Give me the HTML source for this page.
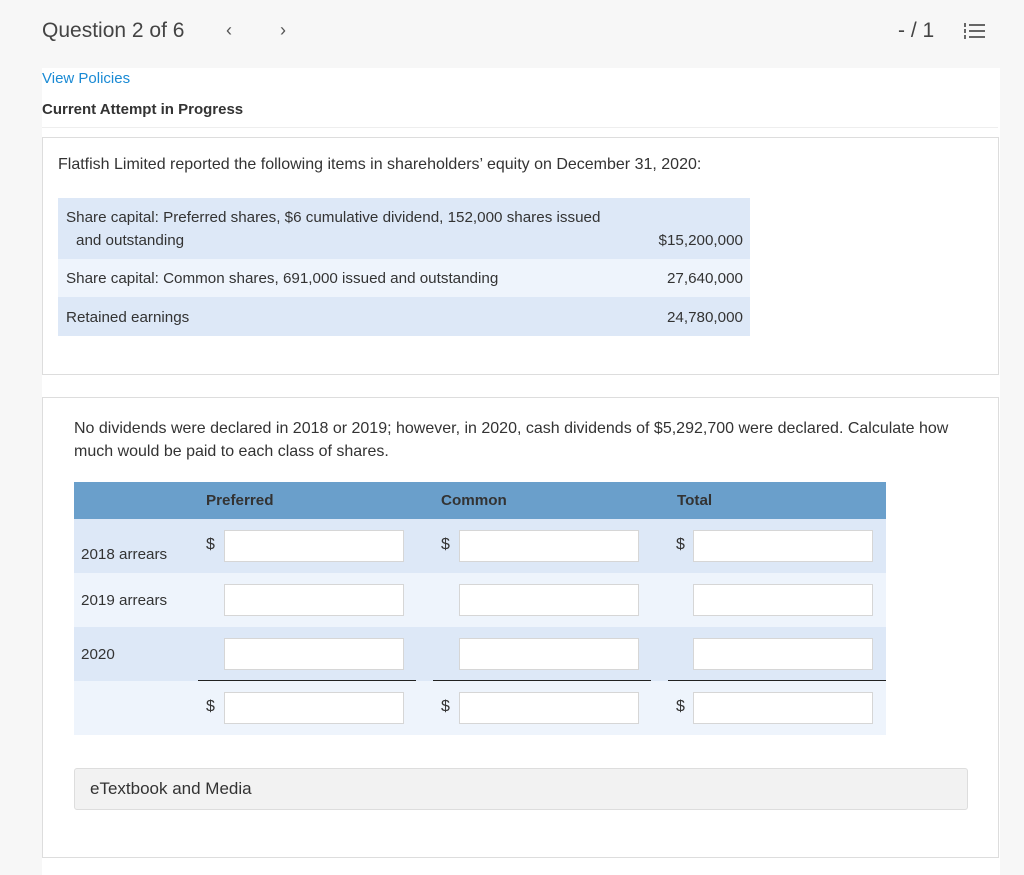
<!DOCTYPE html>
<html><head><style>
body{margin:0;background:#f7f7f7;font-family:"Liberation Sans",sans-serif;color:#333;width:1024px;height:875px;position:relative;overflow:hidden}
.a{position:absolute}
.inp{position:absolute;height:32px;background:#fff;border:1px solid #d6d6d6;box-sizing:border-box;width:180px}
.t{font-size:16px;color:#333}
.s{font-size:15.2px}
.r{text-align:right;width:200px}
</style></head><body>
<div class="a" style="left:42px;top:19px;font-size:21px;color:#444">Question 2 of 6</div>
<div class="a" style="left:226px;top:20px;font-size:18px;color:#555">&lsaquo;</div>
<div class="a" style="left:280px;top:20px;font-size:18px;color:#555">&rsaquo;</div>
<div class="a" style="left:898px;top:19px;font-size:21px;color:#444">- / 1</div>
<svg class="a" style="left:963px;top:22px" width="22" height="18"><g fill="#666"><rect x="6" y="2" width="16" height="2"/><rect x="6" y="8" width="16" height="2"/><rect x="6" y="14" width="16" height="2"/><rect x="1" y="1" width="2" height="4"/><rect x="1" y="7" width="2" height="4"/><rect x="1" y="13" width="2" height="4"/></g></svg>
<div class="a" style="left:42px;top:68px;width:958px;height:807px;background:#fff"></div>
<div class="a" style="left:42px;top:70px;font-size:15px;color:#1a8ad4">View Policies</div>
<div class="a" style="left:42px;top:101px;font-size:15px;font-weight:bold;color:#333">Current Attempt in Progress</div>
<div class="a" style="left:42px;top:127px;width:956px;height:1px;background:#eee"></div>
<div class="a" style="left:42px;top:137px;width:955px;height:236px;border:1px solid #ddd;background:#fff"></div>
<div class="a t" style="left:58px;top:156px">Flatfish Limited reported the following items in shareholders’ equity on December 31, 2020:</div>
<div class="a" style="left:58px;top:198px;width:692px;height:61px;background:#dde8f7"></div>
<div class="a" style="left:58px;top:259px;width:692px;height:38px;background:#eef4fc"></div>
<div class="a" style="left:58px;top:297px;width:692px;height:39px;background:#dde8f7"></div>
<div class="a t s" style="left:66px;top:209px">Share capital: Preferred shares, $6 cumulative dividend, 152,000 shares issued</div>
<div class="a t s" style="left:76px;top:232px">and outstanding</div>
<div class="a t s r" style="left:543px;top:232px">$15,200,000</div>
<div class="a t s" style="left:66px;top:270px">Share capital: Common shares, 691,000 issued and outstanding</div>
<div class="a t s r" style="left:543px;top:270px">27,640,000</div>
<div class="a t s" style="left:66px;top:309px">Retained earnings</div>
<div class="a t s r" style="left:543px;top:309px">24,780,000</div>
<div class="a" style="left:42px;top:397px;width:955px;height:459px;border:1px solid #ddd;background:#fff"></div>
<div class="a t" style="left:74px;top:417px;width:900px;line-height:23px">No dividends were declared in 2018 or 2019; however, in 2020, cash dividends of $5,292,700 were declared. Calculate how much would be paid to each class of shares.</div>
<div class="a" style="left:74px;top:482px;width:812px;height:37px;background:#6a9fcb"></div>
<div class="a t s" style="left:206px;top:492px;font-weight:bold;color:#333">Preferred</div>
<div class="a t s" style="left:441px;top:492px;font-weight:bold;color:#333">Common</div>
<div class="a t s" style="left:677px;top:492px;font-weight:bold;color:#333">Total</div>
<div class="a" style="left:74px;top:519px;width:812px;height:54px;background:#dde8f7"></div>
<div class="a" style="left:74px;top:573px;width:812px;height:54px;background:#eef4fc"></div>
<div class="a" style="left:74px;top:627px;width:812px;height:54px;background:#dde8f7"></div>
<div class="a" style="left:74px;top:681px;width:812px;height:54px;background:#eef4fc"></div>
<div class="a t s" style="left:81px;top:546px">2018 arrears</div>
<div class="a t s" style="left:81px;top:592px">2019 arrears</div>
<div class="a t s" style="left:81px;top:646px">2020</div>
<div class="a t" style="left:206px;top:536px">$</div><div class="a t" style="left:441px;top:536px">$</div><div class="a t" style="left:676px;top:536px">$</div>
<div class="a t" style="left:206px;top:698px">$</div><div class="a t" style="left:441px;top:698px">$</div><div class="a t" style="left:676px;top:698px">$</div>
<div class="inp" style="left:224px;top:530px"></div><div class="inp" style="left:459px;top:530px"></div><div class="inp" style="left:693px;top:530px"></div>
<div class="inp" style="left:224px;top:584px"></div><div class="inp" style="left:459px;top:584px"></div><div class="inp" style="left:693px;top:584px"></div>
<div class="inp" style="left:224px;top:638px"></div><div class="inp" style="left:459px;top:638px"></div><div class="inp" style="left:693px;top:638px"></div>
<div class="inp" style="left:224px;top:692px"></div><div class="inp" style="left:459px;top:692px"></div><div class="inp" style="left:693px;top:692px"></div>
<div class="a" style="left:198px;top:680px;width:218px;height:1px;background:#222"></div>
<div class="a" style="left:433px;top:680px;width:218px;height:1px;background:#222"></div>
<div class="a" style="left:668px;top:680px;width:218px;height:1px;background:#222"></div>
<div class="a" style="left:74px;top:768px;width:892px;height:40px;background:#f2f2f2;border:1px solid #ddd;border-radius:3px"></div>
<div class="a" style="left:90px;top:779px;font-size:17px;color:#333">eTextbook and Media</div>
</body></html>
